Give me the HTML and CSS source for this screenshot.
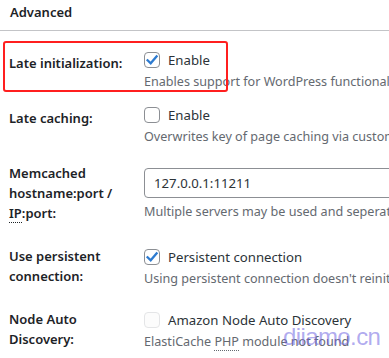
FILE: index.html
```html
<!DOCTYPE html>
<html lang="en">
<head>
    <meta charset="UTF-8">
    <meta name="viewport" content="width=device-width, initial-scale=1.0">
    <title>Advanced</title>
    <link rel="stylesheet" href="styles.css">
</head>
<body>
    <div class="page">
        <h2 class="section-title">Advanced</h2>

        <div class="form-table">
            <!-- late init -->
            <div class="row">
                <div class="th">Late initialization:</div>
                <div class="td">
                    <label class="check">
                        <span class="box checked">
                            <svg viewBox="0 0 16 16" width="16" height="16"><path d="M3.6 8.3 L6.7 11.3 L12.6 4.4" /></svg>
                        </span>
                        Enable
                    </label>
                    <p class="desc">Enables support for WordPress functionality in fragment caching for the page caching engine.</p>
                </div>
            </div>

            <!-- late caching -->
            <div class="row">
                <div class="th">Late caching:</div>
                <div class="td">
                    <label class="check">
                        <span class="box"></span>
                        Enable
                    </label>
                    <p class="desc">Overwrites key of page caching via custom filters by postponing entry extraction.</p>
                </div>
            </div>

            <!-- memcached host -->
            <div class="row">
                <div class="th">Memcached hostname:port / <abbr title="Internet Protocol">IP</abbr>:port:</div>
                <div class="td">
                    <input class="text-input" type="text" value="127.0.0.1:11211">
                    <p class="desc desc-input">Multiple servers may be used and seperated by a comma; e.g. 127.0.0.1:11211</p>
                </div>
            </div>

            <!-- persistent -->
            <div class="row">
                <div class="th">Use persistent connection:</div>
                <div class="td">
                    <label class="check">
                        <span class="box checked">
                            <svg viewBox="0 0 16 16" width="16" height="16"><path d="M3.6 8.3 L6.7 11.3 L12.6 4.4" /></svg>
                        </span>
                        Persistent connection
                    </label>
                    <p class="desc">Using persistent connection doesn't reinitialize memcached object on each request.</p>
                </div>
            </div>

            <!-- node auto discovery -->
            <div class="row">
                <div class="th">Node Auto Discovery:</div>
                <div class="td">
                    <label class="check">
                        <span class="box disabled"></span>
                        Amazon Node Auto Discovery
                    </label>
                    <p class="desc">ElastiCache <abbr title="Hypertext Preprocessor">PHP</abbr> module not found</p>
                </div>
            </div>
        </div>

        <div class="highlight"></div>
        <div class="watermark">diiamo.cn</div>
    </div>
</body>
</html>
```

FILE: styles.css
```css
*{
    margin: 0;
    padding: 0;
    box-sizing: border-box;
    font-family: "Noto Sans", "Open Sans", sans-serif;
}

body{
    background-color: #fff;
    color: #1d2327;
    overflow: hidden;
}

.page{
    position: relative;
    width: 389px;
    height: 358px;
    overflow: hidden;
}

.section-title{
    font-size: 13px;
    font-weight: 600;
    line-height: 20px;
    padding: 2px 0 8px 10px;
    border-bottom: 1px solid #c3c4c7;
}

.form-table{
    margin-top: 11px;
}

.row{
    display: grid;
    grid-template-columns: 144px 1fr;
}

.th{
    align-self: start;
    padding: 11px 10px 12px 9px;
    font-size: 13px;
    font-weight: 600;
    line-height: 20px;
}

.td{
    align-self: center;
    padding: 8px 0 6px;
    white-space: nowrap;
}

abbr{
    text-decoration: none;
    border-bottom: 1px dotted #1d2327;
}

.check{
    display: flex;
    align-items: center;
    gap: 8px;
    height: 20px;
    font-size: 13.2px;
    line-height: 20px;
    color: #2c3338;
}

.box{
    width: 16px;
    height: 16px;
    border: 1px solid #8c8f94;
    border-radius: 4px;
    background: #fff;
    display: flex;
    align-items: center;
    justify-content: center;
    flex: none;
}

.box svg{
    display: block;
    margin: -1px;
}

.box svg path{
    fill: none;
    stroke: #2d7bd0;
    stroke-width: 2.3;
    stroke-linecap: square;
}

.box.disabled{
    border-color: #e4e5e7;
    background: #fcfcfc;
}

.desc{
    margin-top: 3px;
    font-size: 12.6px;
    line-height: 18px;
    color: #646970;
}

.desc abbr{
    border-bottom-color: #646970;
}

.text-input{
    display: block;
    width: 320px;
    height: 30px;
    padding: 0 9px;
    border: 1px solid #8c8f94;
    border-radius: 4px;
    font-family: "Noto Sans", sans-serif;
    font-size: 13.2px;
    color: #2c3338;
    background: #fff;
    outline: 0;
}

.desc-input{
    margin-top: 5px;
}

.highlight{
    position: absolute;
    left: 3px;
    top: 41px;
    width: 225px;
    height: 51px;
    border: 2px solid #ff1f1f;
    border-radius: 3px;
}

.watermark{
    position: absolute;
    left: 283px;
    top: 323px;
    font-family: "Liberation Sans", sans-serif;
    font-size: 24px;
    letter-spacing: -0.6px;
    color: rgba(110, 100, 225, 0.55);
}
```
